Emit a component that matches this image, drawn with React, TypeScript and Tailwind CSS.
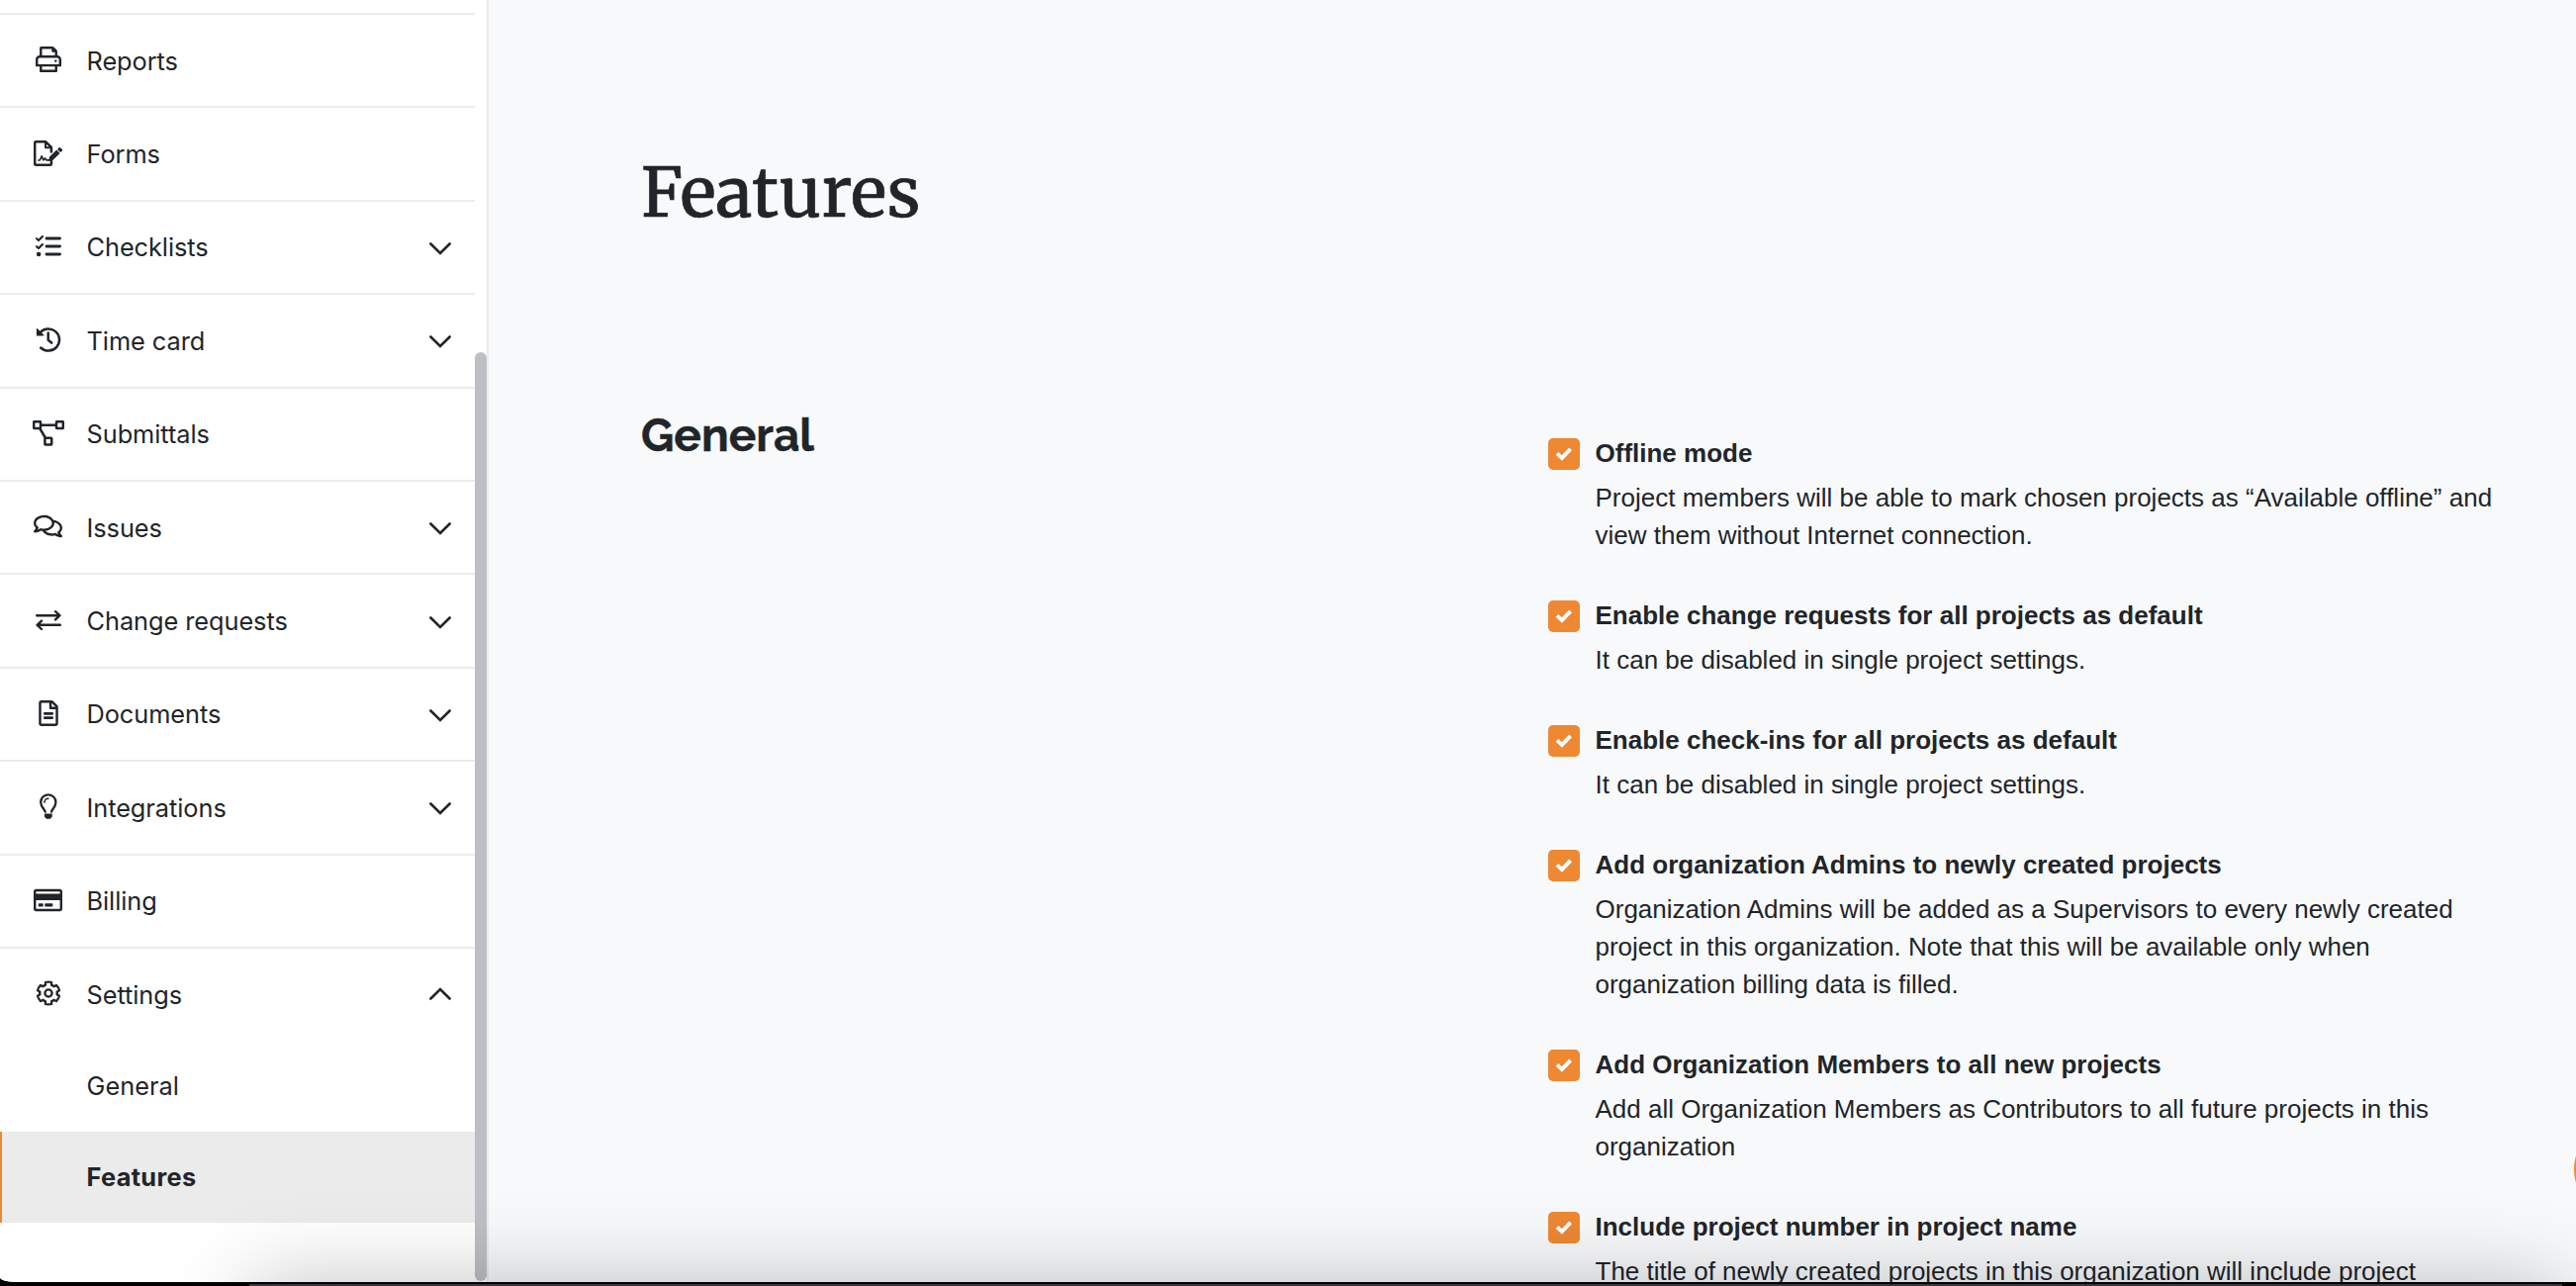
import type { ReactNode } from "react";
import { FaRegComments, FaRegCreditCard, FaRegFileAlt } from "react-icons/fa";

function Glyph({ children, width = 26 }: { children: ReactNode; width?: number }) {
  return (
    <svg
      width={width}
      height={26}
      viewBox={`0 0 ${width} 26`}
      fill="none"
      stroke="currentColor"
      strokeWidth={2.5}
      strokeLinecap="round"
      strokeLinejoin="round"
      className="shrink-0"
    >
      {children}
    </svg>
  );
}

const PrintIcon = () => (
  <svg width={26} height={26} viewBox="0 0 512 512" fill="currentColor">
    <path d="M400 264c-13.25 0-24 10.74-24 24 0 13.25 10.75 24 24 24s24-10.75 24-24c0-13.26-10.75-24-24-24zm32-88V99.88c0-12.73-5.06-24.94-14.06-33.94l-51.88-51.88c-9-9-21.21-14.06-33.94-14.06H110.48C93.64 0 80 14.33 80 32v144c-44.18 0-80 35.82-80 80v128c0 8.84 7.16 16 16 16h64v96c0 8.84 7.16 16 16 16h320c8.84 0 16-7.16 16-16v-96h64c8.84 0 16-7.16 16-16V256c0-44.18-35.82-80-80-80zM128 48h192v48c0 8.84 7.16 16 16 16h48v64H128V48zm256 416H128v-64h256v64zm80-112H48v-96c0-17.64 14.36-32 32-32h352c17.64 0 32 14.36 32 32v96z" />
  </svg>
);

const FormIcon = () => (
  <Glyph width={29}>
    <path d="M17.9 11.5V7L12.2 1.3H2.2a1 1 0 0 0-1 1V23.7a1 1 0 0 0 1 1H16.9a1 1 0 0 0 1-1V20" />
    <path d="M12 1.5V7.3H17.6" strokeWidth={2} />
    <path d="M5 20h1.2l2-4.2 1.8 4 1.6-1.8 1.2 1.8H16" strokeWidth={1.7} />
    <path d="M15.2 20.8l.8-4.2 7.2-7 3.3 3.3-7.2 7z" fill="currentColor" stroke="none" />
    <path d="M26.3 8.9l.9.9" strokeWidth={3.6} />
  </Glyph>
);

const TasksIcon = () => (
  <Glyph>
    <path d="M11 5H24.5M11 13H24.5M11 21H24.5" strokeWidth={2.9} />
    <path d="M1 5.2L3 7.1 7 3M1 13.2L3 15.1 7 11" strokeWidth={2.1} />
    <circle cx={3.1} cy={21} r={2.3} fill="currentColor" stroke="none" />
  </Glyph>
);

const HistoryIcon = () => (
  <Glyph>
    <path d="M4 6.9A11.1 11.1 0 1 1 5.2 21.5" />
    <path d="M1.5 2.6V8.9H7.8z" fill="currentColor" strokeWidth={1.2} />
    <path d="M12.7 6.6V13.8L16.2 16.6" />
  </Glyph>
);

const DiagramIcon = () => (
  <Glyph width={32}>
    <rect x={1.2} y={1.2} width={6.8} height={6.8} rx={0.5} />
    <rect x={24} y={1.2} width={6.8} height={6.8} rx={0.5} />
    <rect x={12.4} y={17.8} width={6.8} height={6.8} rx={0.5} />
    <path d="M8.5 4.7H23.5M7.5 8.5L12.8 17.5" />
  </Glyph>
);

const ExchangeIcon = () => (
  <Glyph>
    <path d="M1.2 8.2H24M20 4.2L24.4 8.2 20 12.4M24.8 17.8H2M6 13.6L1.6 17.8 6 22" strokeWidth={2.4} />
  </Glyph>
);

const BulbIcon = () => (
  <Glyph>
    <path d="M9.7 18.6C9.4 16.4 5.2 13.6 5.2 8.9a7.6 7.6 0 0 1 15.2 0C20.4 13.6 16.3 16.4 16 18.6" strokeWidth={2.3} />
    <path d="M8.9 9.2a4 4 0 0 1 4-4" strokeWidth={1.5} />
    <path d="M9 20.6H16.7V23.2L15 25.8H10.7L9 23.2z" fill="currentColor" stroke="none" />
  </Glyph>
);

/* Outline of a cog with six teeth around (13, 13). */
const cogPath =
  Array.from({ length: 6 }, (_, i) => {
    const at = (r: number, deg: number) => {
      const a = ((i * 60 + deg - 90) * Math.PI) / 180;
      return `${(13 + r * Math.cos(a)).toFixed(2)} ${(13 + r * Math.sin(a)).toFixed(2)}`;
    };
    return `${i === 0 ? "M" : "L"}${at(8.8, -20)}L${at(11.4, -16)}Q${at(11.7, 0)} ${at(11.4, 16)}L${at(8.8, 20)}Q${at(8.2, 25)} ${at(9, 28)}L${at(9, 32)}Q${at(8.2, 35)} ${at(8.8, 40)}`;
  }).join("") + "Z";

const CogIcon = () => (
  <Glyph>
    <path d={cogPath} strokeWidth={2.2} />
    <circle cx={13} cy={13} r={3.6} strokeWidth={2.3} />
  </Glyph>
);

type NavItem = { label: string; icon: ReactNode; chevron?: "down" | "up" };

const navItems: NavItem[] = [
  { label: "Reports", icon: <PrintIcon /> },
  { label: "Forms", icon: <FormIcon /> },
  { label: "Checklists", icon: <TasksIcon />, chevron: "down" },
  { label: "Time card", icon: <HistoryIcon />, chevron: "down" },
  { label: "Submittals", icon: <DiagramIcon /> },
  { label: "Issues", icon: <FaRegComments className="h-[26px] w-[29px]" />, chevron: "down" },
  { label: "Change requests", icon: <ExchangeIcon />, chevron: "down" },
  { label: "Documents", icon: <FaRegFileAlt className="h-[26px] w-[20px]" />, chevron: "down" },
  { label: "Integrations", icon: <BulbIcon />, chevron: "down" },
  { label: "Billing", icon: <FaRegCreditCard className="h-[26px] w-[29px]" /> },
  { label: "Settings", icon: <CogIcon />, chevron: "up" },
];

function NavRow({ label, icon, chevron }: NavItem) {
  return (
    <a className="flex h-[94.4px] shrink-0 items-center border-t-2 border-[#ececec] pl-8 pr-6">
      <span className="mb-[2px] flex w-[33px] shrink-0 items-center justify-center">{icon}</span>
      <span className="ml-[22.5px] flex-1 pt-px leading-[38px] tracking-[-0.05px]">{label}</span>
      {chevron && (
        <svg
          width={22}
          height={13}
          viewBox="0 0 22 13"
          fill="none"
          stroke="currentColor"
          strokeWidth={2.6}
          strokeLinecap="round"
          className={chevron === "up" ? "-mt-px rotate-180" : "mt-[3px]"}
        >
          <path d="M1.4 1.5L11 11L20.6 1.5" />
        </svg>
      )}
    </a>
  );
}

const features: { title: string; lines: string[] }[] = [
  {
    title: "Offline mode",
    lines: [
      "Project members will be able to mark chosen projects as “Available offline” and",
      "view them without Internet connection.",
    ],
  },
  { title: "Enable change requests for all projects as default", lines: ["It can be disabled in single project settings."] },
  { title: "Enable check-ins for all projects as default", lines: ["It can be disabled in single project settings."] },
  {
    title: "Add organization Admins to newly created projects",
    lines: [
      "Organization Admins will be added as a Supervisors to every newly created",
      "project in this organization. Note that this will be available only when",
      "organization billing data is filled.",
    ],
  },
  {
    title: "Add Organization Members to all new projects",
    lines: ["Add all Organization Members as Contributors to all future projects in this", "organization"],
  },
  {
    title: "Include project number in project name",
    lines: ["The title of newly created projects in this organization will include project"],
  },
];

export default function App() {
  return (
    <div className="relative h-[1300px] w-[2604px] overflow-hidden bg-black text-[#212529]">
      <div className="relative flex h-[1296px] overflow-hidden rounded-bl-[15px_5px] bg-[#f8f9fb]">
        <aside className="flex w-[494px] shrink-0 border-r-2 border-[#e9ebed] bg-white font-['Inter',sans-serif] text-[25.33px]">
          <nav className="flex w-[480px] flex-col pt-[13px]">
            {navItems.map((item) => (
              <NavRow key={item.label} {...item} />
            ))}
            <a className="flex h-[92.6px] shrink-0 items-center pl-[87.5px]">General</a>
            <a className="flex h-[92px] shrink-0 items-center border-l-2 border-[#ee8833] bg-[#ebebeb] pl-[85.5px] font-bold tracking-[0.35px]">
              Features
            </a>
          </nav>
          <div className="mt-[356px] h-[939px] w-3 rounded-full bg-[#bcc0c4]" />
        </aside>

        <main className="flex-1 pl-[154px]">
          <h1 className="pt-[150px] font-['Merriweather','DejaVu_Serif_Condensed',serif] text-[68.5px] leading-[90px] tracking-[0.4px] [-webkit-text-stroke:0.7px_#212529]">
            Features
          </h1>
          <div className="flex pt-[174px]">
            <h2 className="w-[917px] font-['Raleway','Lato',sans-serif] text-[46px] font-bold leading-[52px] [-webkit-text-stroke:0.4px_#212529]">
              General
            </h2>
            <ul className="pt-[25px] font-['Liberation_Sans',sans-serif]">
              {features.map(({ title, lines }) => (
                <li key={title} className="flex pb-[43px]">
                  <span className="mt-[4px] size-8 rounded-[5px] bg-[#ee8833] text-white">
                    <svg viewBox="0 0 32 32" fill="none" stroke="currentColor" strokeWidth={3.9} className="size-8">
                      <path d="M9 15.3L13.9 19.9L22.6 10.9" />
                    </svg>
                  </span>
                  <div className="ml-[15.5px] whitespace-nowrap text-[26px] leading-[38px]">
                    <h3 className="mb-[7px] font-bold">{title}</h3>
                    {lines.map((line) => (
                      <p key={line}>{line}</p>
                    ))}
                  </div>
                </li>
              ))}
            </ul>
          </div>
        </main>

        <div className="absolute left-[2602px] top-[1132px] size-[100px] rounded-full bg-[#ee8833]" />
        <div className="absolute left-[250px] right-[10px] top-[1298px] h-[100px] rounded-[30px] shadow-[0_0_86px_rgba(0,0,0,0.25)]" />
      </div>
      <div className="absolute bottom-0 left-[252px] right-[14px] h-[2px] bg-[#38383a]" />
    </div>
  );
}
